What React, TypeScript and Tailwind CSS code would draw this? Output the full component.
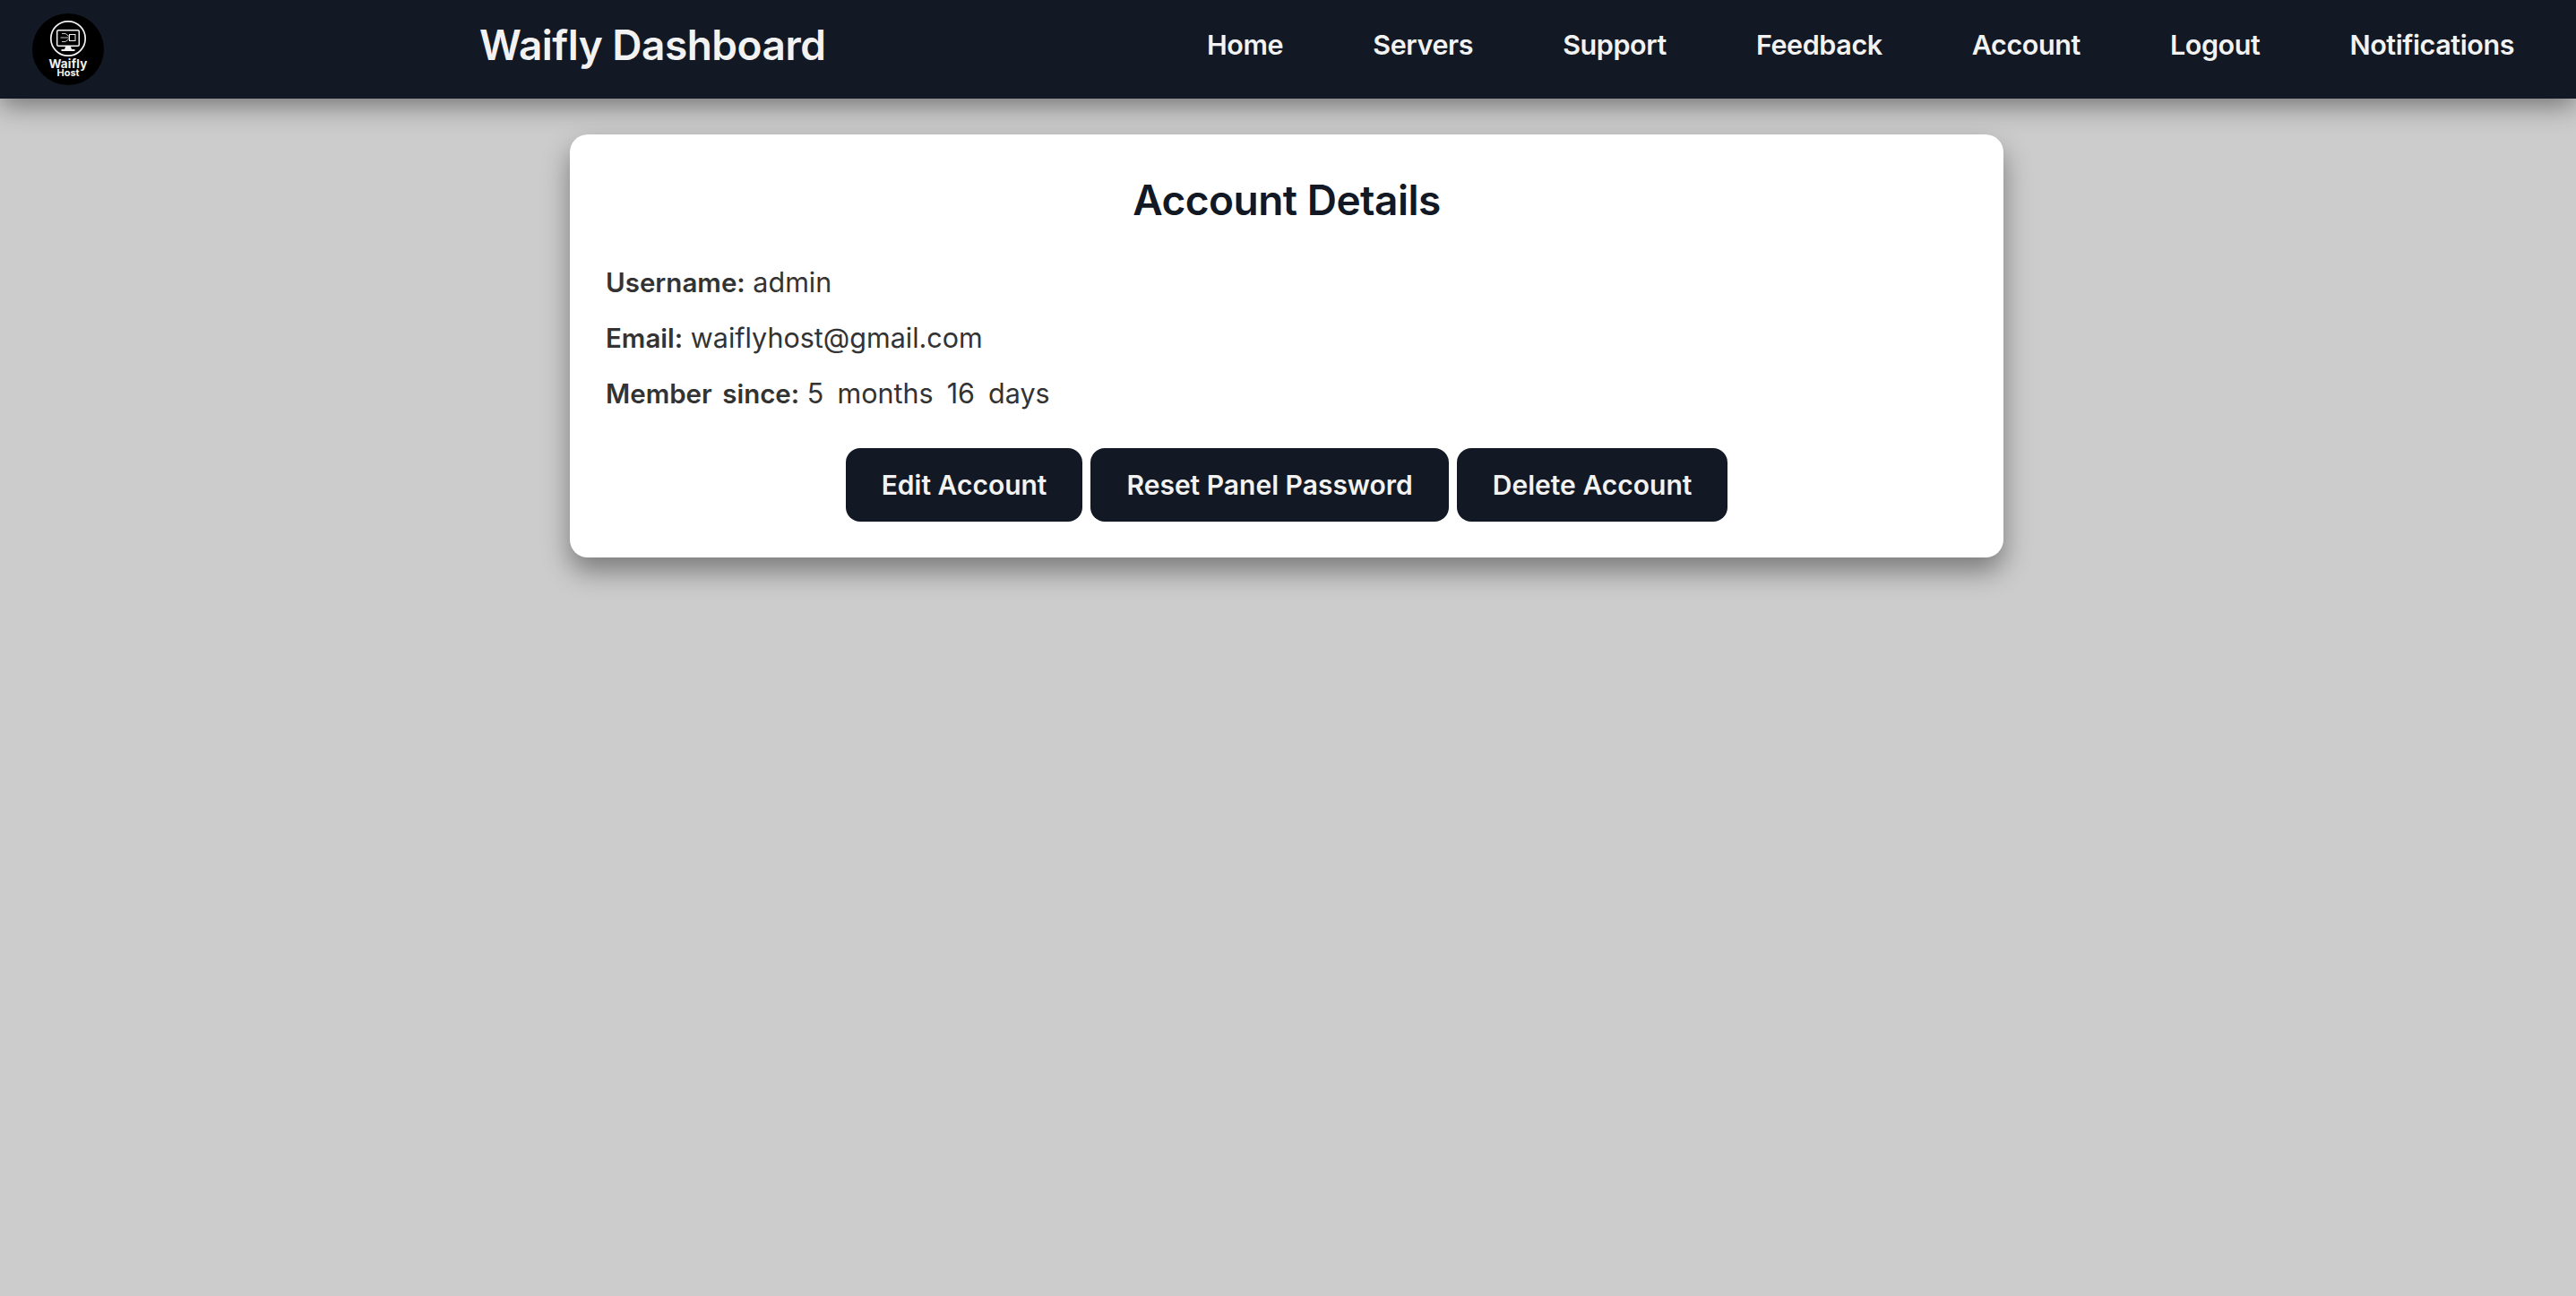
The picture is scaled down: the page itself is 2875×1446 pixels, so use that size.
const navLinks = ['Home', 'Servers', 'Support', 'Feedback', 'Account', 'Logout', 'Notifications'];
const actions = ['Edit Account', 'Reset Panel Password', 'Delete Account'];
const details = [
    { label: 'Username:', value: 'admin' },
    { label: 'Email:', value: 'waiflyhost@gmail.com' },
    { label: 'Member since:', value: '5 months 16 days' },
];

const Logo = () => (
    <svg viewBox="0 0 80 80" className="h-20 w-20 shrink-0">
        <circle cx="40" cy="40" r="40" fill="#000" />
        <circle cx="40" cy="28" r="19.2" fill="none" stroke="#f2f2f2" strokeWidth="1.7" />
        <rect x="27.7" y="18.7" width="24.6" height="17.6" rx="1.5" fill="none" stroke="#f2f2f2" strokeWidth="1.5" />
        <path d="M37 37h6l1 3h3.5v2h-15v-2H36z" fill="#f2f2f2" />
        <rect x="41.5" y="23.5" width="6.5" height="7" fill="none" stroke="#f2f2f2" strokeWidth="1" />
        <path d="M33 22.5h4l4 3M31.5 27h10M33 31.5h4l4-3" fill="none" stroke="#f2f2f2" strokeWidth="0.8" />
        <text x="40" y="61" textAnchor="middle" fill="#f2f2f2" fontSize="13.5" fontWeight="700" letterSpacing="0.2" fontFamily="Inter, sans-serif">Waifly</text>
        <text x="40" y="70" textAnchor="middle" fill="#f2f2f2" fontSize="11" fontWeight="700" fontFamily="Inter, sans-serif">Host</text>
    </svg>
);

const App = () => {
    return (
        <div className="min-h-screen bg-[#cccccc] font-['Inter',sans-serif]">
            <header className="flex h-[110px] items-center bg-[#121924] pl-9 pr-[69px] text-[#f2f2f2] shadow-[0_7px_28px_rgba(0,0,0,0.45)]">
                <Logo />
                <h1 className="mb-[9px] ml-[419px] text-[46px] font-semibold tracking-[-0.5px]">Waifly Dashboard</h1>
                <nav className="mb-[10px] ml-auto flex gap-[100px]">
                    {navLinks.map((link) => (
                        <a key={link} className="text-[30.5px] font-semibold tracking-[-0.4px]">{link}</a>
                    ))}
                </nav>
            </header>

            <main className="ml-[636px] mt-10 w-[1600px] rounded-[20px] bg-white p-10 shadow-[0_15px_30px_rgba(0,0,0,0.4)]">
                <h2 className="text-center text-[46px] font-semibold leading-[66px] tracking-[-0.5px] text-[#121924]">Account Details</h2>
                <div className="mt-[35px] flex flex-col gap-[14px] text-[30.5px] text-[#333333]">
                    {details.map((row) => (
                        <p key={row.label} className="h-12 leading-[48px]">
                            <strong className="text-[29.5px] font-semibold [word-spacing:4px]">{row.label}</strong>{' '}
                            <span className="[word-spacing:6.5px]">{row.value}</span>
                        </p>
                    ))}
                </div>
                <div className="mt-[37px] flex justify-center gap-[9px]">
                    {actions.map((action) => (
                        <button key={action} className="h-[82px] rounded-2xl bg-[#121924] px-10 text-[30px] font-semibold text-[#f2f2f2]">
                            {action}
                        </button>
                    ))}
                </div>
            </main>
        </div>
    );
};

export default App;
